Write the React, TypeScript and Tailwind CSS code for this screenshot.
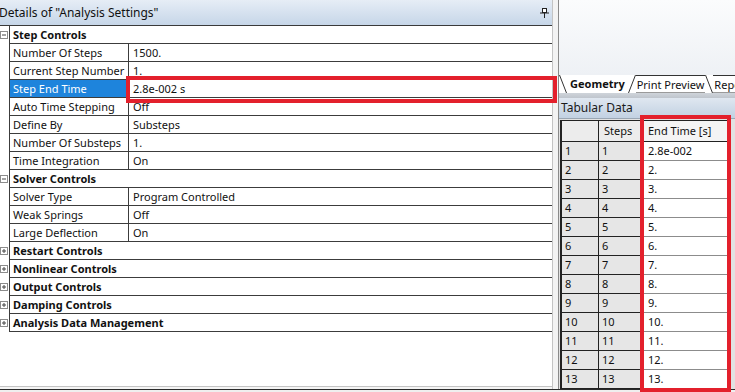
import React from 'react';

type Row =
  | { kind: 'group'; label: string; open: boolean }
  | { kind: 'prop'; label: string; value: string; selected?: boolean };

const rows: Row[] = [
  { kind: 'group', label: 'Step Controls', open: true },
  { kind: 'prop', label: 'Number Of Steps', value: '1500.' },
  { kind: 'prop', label: 'Current Step Number', value: '1.' },
  { kind: 'prop', label: 'Step End Time', value: '2.8e-002 s', selected: true },
  { kind: 'prop', label: 'Auto Time Stepping', value: 'Off' },
  { kind: 'prop', label: 'Define By', value: 'Substeps' },
  { kind: 'prop', label: 'Number Of Substeps', value: '1.' },
  { kind: 'prop', label: 'Time Integration', value: 'On' },
  { kind: 'group', label: 'Solver Controls', open: true },
  { kind: 'prop', label: 'Solver Type', value: 'Program Controlled' },
  { kind: 'prop', label: 'Weak Springs', value: 'Off' },
  { kind: 'prop', label: 'Large Deflection', value: 'On' },
  { kind: 'group', label: 'Restart Controls', open: false },
  { kind: 'group', label: 'Nonlinear Controls', open: false },
  { kind: 'group', label: 'Output Controls', open: false },
  { kind: 'group', label: 'Damping Controls', open: false },
  { kind: 'group', label: 'Analysis Data Management', open: false },
];

const tabular = [
  '2.8e-002', '2.', '3.', '4.', '5.', '6.', '7.', '8.', '9.', '10.', '11.', '12.', '13.',
];

const ExpandBox: React.FC<{ open: boolean }> = ({ open }) => (
  <svg width="8" height="8" viewBox="0 0 8 8" className="block">
    <rect x="0.5" y="0.5" width="7" height="7" fill="#fff" stroke="#8c8c8c" />
    <line x1="2" y1="4" x2="6" y2="4" stroke="#444" />
    {!open && <line x1="4" y1="2" x2="4" y2="6" stroke="#444" />}
  </svg>
);

const PinIcon = () => (
  <svg width="9" height="10" viewBox="0 0 9 10" className="block">
    <rect x="2.5" y="0.5" width="4" height="4" fill="#fff" stroke="#222" />
    <line x1="0" y1="5" x2="9" y2="5" stroke="#222" />
    <line x1="4.5" y1="5" x2="4.5" y2="10" stroke="#222" />
  </svg>
);

const Slant: React.FC<{ dir: 'down' | 'up' }> = ({ dir }) => (
  <svg width="8" height="18" viewBox="0 0 8 18" className="block shrink-0">
    {dir === 'down' ? (
      <line x1="0.5" y1="0" x2="7.5" y2="18" stroke="#333" />
    ) : (
      <line x1="0.5" y1="18" x2="7.5" y2="0" stroke="#333" />
    )}
  </svg>
);

const DetailsPanel = () => (
  <div className="w-[553px] h-full flex flex-col border-r border-[#c4c4c4] bg-white">
    {/* title bar */}
    <div className="h-[26px] shrink-0 flex items-center justify-between border-b border-[#3a3a3a] bg-gradient-to-b from-[#e6edf6] to-[#c6d6e8] pr-[3px]">
      <span className="text-[12px] text-[#111] -ml-[1px] whitespace-nowrap">Details of "Analysis Settings"</span>
      <PinIcon />
    </div>

    {/* property grid */}
    <div className="flex-1 flex flex-col">
      {rows.map((r, i) => (
        <div key={i} className="h-[18px] flex">
          <div className="w-[9px] shrink-0 flex items-center">
            {r.kind === 'group' && <ExpandBox open={r.open} />}
          </div>
          <div className="flex-1 flex border-l border-b border-[#3c3c3c]">
            {r.kind === 'group' ? (
              <div className="pl-[3px] font-bold leading-[17px] whitespace-nowrap">{r.label}</div>
            ) : (
              <>
                <div
                  className={`w-[119px] shrink-0 border-r border-[#3c3c3c] pl-[3px] leading-[17px] whitespace-nowrap ${
                    r.selected ? 'bg-[#1e84dc] text-white' : ''
                  }`}
                >
                  {r.label}
                </div>
                <div className="flex-1 pl-[4px] leading-[17px] whitespace-nowrap">{r.value}</div>
              </>
            )}
          </div>
        </div>
      ))}
    </div>
    <div className="h-[3px] shrink-0 border-t border-[#c4c4c4] bg-[#f4f4f4]" />
  </div>
);

const RightPanel = () => (
  <div className="flex-1 min-w-0 h-full flex flex-col border-l border-[#8a8a8a] bg-[#f7f8fa]">
    {/* geometry view */}
    <div className="h-[75px] shrink-0 bg-gradient-to-b from-[#fbfcfd] to-[#eef1f5]" />

    {/* tabs */}
    <div className="h-[18px] shrink-0 flex items-stretch overflow-hidden bg-white text-[11px] whitespace-nowrap">
      <Slant dir="down" />
      <div className="shrink-0 px-[3px] font-bold leading-[18px]">Geometry</div>
      <Slant dir="up" />
      <div className="shrink-0 px-[1px] leading-[17px] border-t border-[#333] border-b border-b-[#9a9a9a]">Print Preview</div>
      <Slant dir="down" />
      <div className="shrink-0 pl-[1px] leading-[17px] border-t border-[#333] border-b border-b-[#9a9a9a]">Report</div>
    </div>

    <div className="h-[5px] shrink-0 bg-gradient-to-b from-[#cfd4da] to-[#bfc5cd]" />

    {/* tabular data */}
    <div className="h-[21px] shrink-0 flex items-center pl-[2px] border-b border-[#9aa6b3] bg-gradient-to-b from-[#dfe7f0] to-[#c2d1e2] text-[12px] text-[#1a1a1a]">
      Tabular Data
    </div>

    <div className="flex-1 bg-[#e2e2e2] pt-[1px] overflow-hidden">
      <div className="ml-[1px] w-[170px] border-l-2 border-t border-[#222] bg-white">
        <div className="h-[21px] flex text-[11px]">
          <div className="w-[37px] border-r border-b border-[#222] bg-[#ececec]" />
          <div className="w-[43px] border-r border-b border-[#222] bg-[#ececec] pl-[5px] leading-[20px]">Steps</div>
          <div className="flex-1 border-b border-[#222] bg-[#f4f4f4] pl-[6px] leading-[20px] whitespace-nowrap">End Time [s]</div>
        </div>
        {tabular.map((v, i) => (
          <div key={i} className="h-[19px] flex text-[11px]">
            <div className="w-[37px] border-r border-b border-[#222] bg-[#e6e6e6] pl-[3px] leading-[18px]">{i + 1}</div>
            <div className="w-[43px] border-r border-b border-[#222] bg-[#e6e6e6] pl-[3px] leading-[18px]">{i + 1}</div>
            <div className="flex-1 border-b border-[#8c8c8c] bg-white pl-[6px] leading-[18px]">{v}</div>
          </div>
        ))}
      </div>
    </div>
  </div>
);

export default function App() {
  return (
    <div className="relative w-[735px] h-[392px] overflow-hidden bg-white font-['Noto_Sans',sans-serif] text-[11px] text-[#111] flex flex-col">
      <div className="h-[389px] flex shrink-0">
        <DetailsPanel />
        <div className="w-[5px] shrink-0 bg-[#f3f3f3]" />
        <RightPanel />
      </div>
      <div className="flex-1 border-t border-[#2a2a2a] bg-[#efefef]" />

      {/* annotation boxes */}
      <div className="absolute left-[126px] top-[76px] w-[431px] h-[27px] border-4 border-[#e3202c]" />
      <div className="absolute left-[640px] top-[115px] w-[91px] h-[277px] border-4 border-[#e3202c]" />
    </div>
  );
}
